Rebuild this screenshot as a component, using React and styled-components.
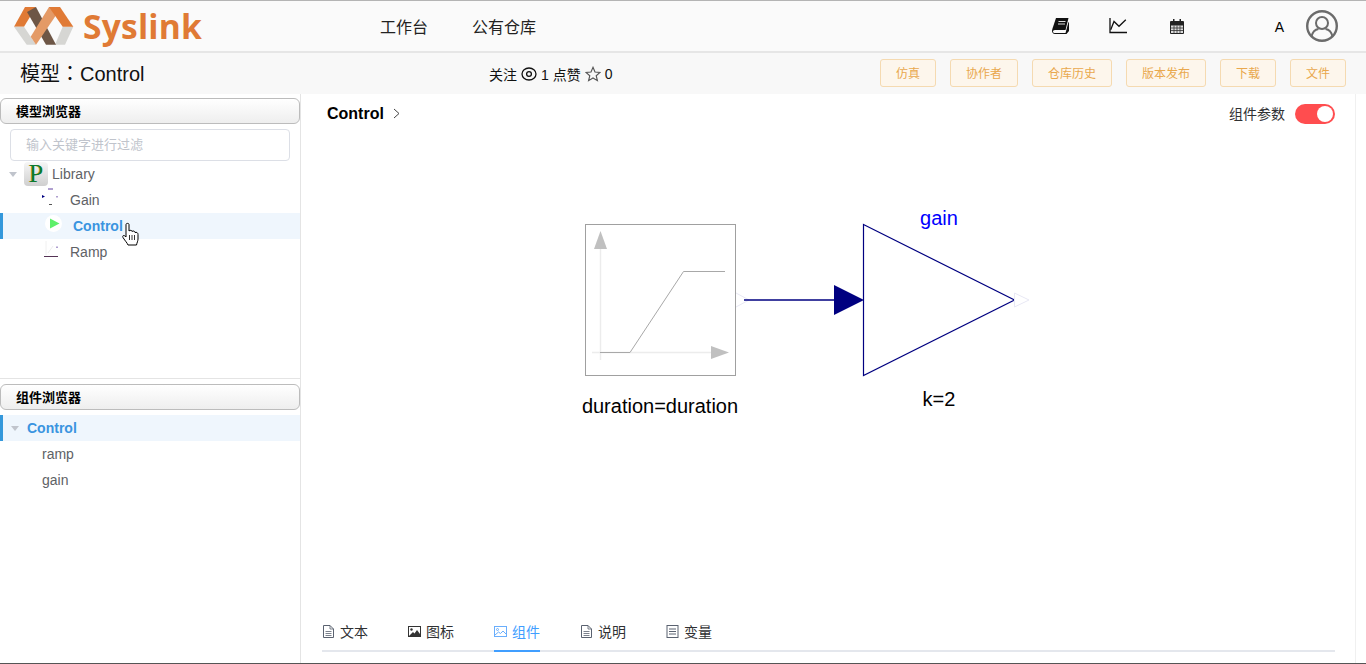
import React from "react";
import styled, { createGlobalStyle } from "styled-components";

const Global = createGlobalStyle`
  html, body { margin: 0; padding: 0; height: 100%; overflow: hidden; background: #fff; }
  * { box-sizing: border-box; }
  #root { height: 664px; font-family: "Liberation Sans", "Noto Sans CJK SC", sans-serif; color: #000; }
`;

const Page = styled.div`
  height: 664px; display: flex; flex-direction: column; overflow: hidden;
  border-top: 1px solid #b4b4b4; border-bottom: 1px solid #555;
`;
const Header = styled.header`
  height: 52px; flex: none; display: flex; align-items: center; background: #fafafa;
  border-bottom: 2px solid #e6e6e6; padding-left: 14px;
`;
const Brand = styled.div`display: flex; align-items: center; width: 366px; gap: 9px;`;
const BrandName = styled.span`
  font-family: "Open Sans", sans-serif; font-weight: 700; font-size: 33.6px; line-height: 40px;
  color: #e07a35; letter-spacing: 0.2px;
`;
const Nav = styled.nav`display: flex; gap: 44px; font-size: 16px; color: #222;`;
const HeaderTools = styled.div`
  margin-left: auto; display: flex; align-items: center; padding-right: 28px;
`;
const ToolIcon = styled.span`
  width: 18px; height: 18px; display: flex; align-items: center; justify-content: center;
  margin-right: ${p => p.$gap}px;
`;
const UserLetter = styled.span`font-size: 14px; margin: 2px 22px 0 0;`;
const UserIcon = styled.span`display: flex;`;

const SubBar = styled.div`
  height: 41px; flex: none; background: #f8f8f8; display: flex; align-items: center; padding: 0 20px;
`;
const Title = styled.div`
  font-family: "Liberation Sans", "Noto Sans CJK TC", sans-serif;
  font-size: 20px; line-height: 26px; width: 469px; color: #111;
`;
const Stats = styled.div`display: flex; align-items: center; gap: 4px; font-size: 14px; color: #111;`;
const Actions = styled.div`margin: -2px 0 0 auto; display: flex; gap: 14px;`;
const ActionButton = styled.button`
  height: 28px; padding: 0 15px; font: 12px "Liberation Sans", "Noto Sans CJK SC", sans-serif;
  color: #e9a84d; background: #fdf6ec; border: 1px solid #f5dab1; border-radius: 3px;
`;

const Body = styled.div`flex: 1; min-height: 0; display: flex;`;
const Sidebar = styled.aside`
  width: 301px; flex: none; border-right: 1px solid #e4e4e4; display: flex; flex-direction: column;
`;
const Panel = styled.section`
  height: ${p => p.$height}; flex: ${p => p.$grow ? 1 : "none"};
  padding-top: ${p => p.$top}px; ${p => p.$divided && "border-bottom: 1px solid #e4e4e4;"}
`;
const PanelHead = styled.div`
  height: 26px; border: 1px solid #bcbcbc; border-radius: 6px; padding-left: 15px;
  background: linear-gradient(#ffffff, #eeeeee); font-size: 13px; font-weight: 700; line-height: 25px;
`;
const Filter = styled.div`
  margin: 5px 10px 0; height: 32px; border: 1px solid #dcdfe6; border-radius: 4px;
  padding-left: 15px; font-size: 13px; line-height: 29px; color: #c0c4cc;
`;
const Row = styled.div`
  height: 26px; display: flex; align-items: center; position: relative; font-size: 14px; color: #606266;
  padding-left: ${p => p.$indent}px;
  ${p => p.$active && `
    background: #eff6fd; color: #3a94e0; font-weight: 700;
    box-shadow: inset 3px 0 0 #3498db;
  `}
`;
const Caret = styled.span`
  width: 0; height: 0; border: 4px solid transparent; border-top: 5px solid #c0c4cc; border-bottom: 0;
  margin-right: ${p => p.$gap}px;
`;
const TreeGlyph = styled.svg`flex: none; margin: -6px ${p => p.$gap}px 0 0;`;
const PBadge = styled.span`
  width: 24px; height: 24px; border-radius: 4px; margin-right: 4px; flex: none;
  background: linear-gradient(#f6f6f6, #cfcfcf); text-align: center;
  font: 26px/23px "Liberation Serif", serif; color: #0a7a30; text-shadow: -0.6px 0 0 #d0a000;
`;
const HandCursor = styled.svg`position: absolute; left: 122px; top: 9px;`;
const Spacer = styled.div`height: ${p => p.$h}px;`;

const Main = styled.main`
  flex: 1; min-width: 0; display: flex; flex-direction: column; border-right: 1px solid #f0f0f0;
  margin-right: 10px; padding: 0 20px 0 21px;
`;
const Crumb = styled.div`
  height: 40px; flex: none; display: flex; align-items: center; padding-left: 5px;
`;
const CrumbTitle = styled.span`font-size: 16px; font-weight: 700;`;
const CrumbArrow = styled.svg`margin: -2px 0 0 9px;`;
const ToggleLabel = styled.span`margin: -2px 0 0 auto; font-size: 14px; color: #303133;`;
const Toggle = styled.span`
  margin-left: 10px; width: 40px; height: 20px; border-radius: 10px; background: #ff4d4f; position: relative;
  &::after { content: ""; position: absolute; right: 2px; top: 2px; width: 16px; height: 16px; border-radius: 50%; background: #fff; }
`;
const Canvas = styled.div`flex: 1; min-height: 0; padding: 66px 0 0 248px;`;
const DiagramSvg = styled.svg`display: block;`;
const Tabs = styled.div`
  flex: none; height: 38px; display: flex; gap: 40px; border-bottom: 2px solid #e4e7ed; margin-bottom: 11px;
`;
const Tab = styled.div`
  height: 38px; flex: none; display: flex; align-items: center; gap: 5px; font-size: 14px; padding-bottom: 2px;
  color: ${p => p.$active ? "#409eff" : "#303133"};
  border-bottom: 2px solid ${p => p.$active ? "#409eff" : "transparent"};
`;

const Logo = () => (
  <svg width="60" height="38" viewBox="0 0 60 38">
    <path d="M0 19.700L11 0H22L10 19.700Z" fill="#e07a35" />
    <path d="M0 19.700H10L22 37.700H12.700Z" fill="#d6d6d3" />
    <path d="M48.700 19.700H59.300L51 37.700H41Z" fill="#d6d6d3" />
    <path d="M22 0L42 37.700H32L13 5Z" fill="#6d5646" />
    <path d="M35 0H46L41 9.700L22 37.700L16.700 29.700Z" fill="#e49a66" />
    <path d="M35 0H46L59.300 19.700H48.700Z" fill="#e07a35" />
  </svg>
);

const BookIcon = () => (
  <svg width="17" height="16" viewBox="0 0 17 16">
    <path d="M4 0h12.500l-3 12H3C1.500 12 1 13 1 13.500 1 14.500 2 15 3 15h10.500L16.500 4l.5.500v8.500l-2.500 3H3C1 16 0 14.500 0 13c0-1 .5-2.500 1-4z" fill="#111" />
    <path d="M6.500 3.500h7M6 6h7" stroke="#ddd" strokeWidth="1" />
  </svg>
);
const ChartIcon = () => (
  <svg width="18" height="16" viewBox="0 0 18 16" fill="none" stroke="#111">
    <path d="M1 0V14.500H18" strokeWidth="1.300" />
    <path d="M1.700 11.700L5 3.500L10 8.300L16.800 1.700" strokeWidth="1.300" />
  </svg>
);
const CalendarIcon = () => (
  <svg width="14" height="15" viewBox="0 0 14 15">
    <rect x="0" y="2" width="14" height="13" rx="1" fill="#222" />
    <rect x="3" y="0" width="1.500" height="3" fill="#222" />
    <rect x="9.500" y="0" width="1.500" height="3" fill="#222" />
    <rect x="1" y="6.500" width="12" height="7.500" fill="#ddd" />
    <path d="M1 9h12M1 11.500h12M4 6.500v7.500M7 6.500v7.500M10 6.500v7.500" stroke="#333" strokeWidth=".8" />
  </svg>
);
const UserGlyph = () => (
  <svg width="32" height="32" viewBox="0 0 32 32" fill="none" stroke="#6b6b6b">
    <circle cx="16" cy="16" r="14.800" strokeWidth="2.400" />
    <circle cx="16" cy="13" r="6" strokeWidth="2" />
    <path d="M5.500 26.500c1-4.500 3.500-7 7-7.500M26.500 26.500c-1-4.500-3.500-7-7-7.500" strokeWidth="2" />
  </svg>
);
const EyeIcon = () => (
  <svg width="16" height="14" viewBox="0 0 16 14" fill="none" stroke="#111" strokeWidth="1.300">
    <ellipse cx="8" cy="7" rx="7" ry="6" />
    <circle cx="8" cy="7" r="2.400" />
  </svg>
);
const StarIcon = () => (
  <svg width="16" height="16" viewBox="0 0 24 24" fill="none" stroke="#555" strokeWidth="1.700">
    <path d="M12 2l3 7 7.500.6-5.700 5 1.800 7.400L12 18l-6.600 4 1.800-7.400-5.700-5L9 9z" />
  </svg>
);
const DocIcon = () => (
  <svg width="13" height="13" viewBox="0 0 13 13" fill="none" stroke="#5a6270">
    <path d="M1.500.5H8L11.500 4V12.500H1.500Z" />
    <path d="M8 .5V4H11.500M3.500 6.500H9.500M3.500 8.500H9.500M3.500 10.500H9.500" strokeWidth=".8" />
  </svg>
);
const PictureIcon = () => (
  <svg width="13" height="13" viewBox="0 0 13 13">
    <rect x=".5" y="1.500" width="12" height="10" fill="#fff" stroke="#333" />
    <circle cx="3.500" cy="4.500" r="1.200" fill="#333" />
    <path d="M1 11L5 7l1.500 1.500L9 5l3 4v2.500H1Z" fill="#333" />
  </svg>
);
const PictureOutlineIcon = () => (
  <svg width="13" height="13" viewBox="0 0 13 13" fill="none" stroke="#6aaefc">
    <rect x=".5" y="1.500" width="12" height="10" />
    <circle cx="3.500" cy="4.500" r="1" />
    <path d="M1 10L4.500 7l2 1.500L9 6l3 3" />
  </svg>
);
const ListIcon = () => (
  <svg width="13" height="13" viewBox="0 0 13 13" fill="none" stroke="#5a6270">
    <rect x="1" y=".5" width="11" height="12" />
    <path d="M3 4h7M3 6.500h7M3 9h7" />
  </svg>
);
const Hand = () => (
  <HandCursor width="18" height="24" viewBox="0 0 18 24">
    <path d="M4 2.500C4 1 7 1 7 2.500V9C8 8 10 8 10 9.500C11 8.500 13 9 13 10.500C14.500 10 16 10.500 16 12.500V17C16 19 15 20.500 14.500 23H6C5 20.500 3.500 19.500 1 15.500C0 13.500 2 12.500 4 15Z" fill="#fff" stroke="#000" />
    <path d="M7.500 13v5M10 13v5M12.500 13v5" stroke="#000" strokeWidth=".8" />
  </HandCursor>
);

const Diagram = () => (
  <DiagramSvg width="480" height="224" viewBox="570 200 480 224">
    <rect x="585.500" y="224.500" width="150" height="151" fill="#fff" stroke="#a0a0a0" />
    <path d="M600.500 245V360" stroke="#ececec" strokeWidth="1.500" />
    <path d="M592 352.500H715" stroke="#ececec" strokeWidth="1.500" />
    <path d="M600.500 231L607 249H594Z" fill="#c0c0c0" />
    <path d="M729 352.500L711 346V359Z" fill="#c0c0c0" />
    <path d="M600 352.500H630L683.500 271.500H725" fill="none" stroke="#a8a8a8" />
    <path d="M736 293L749 300L736 307" fill="none" stroke="#e8e8f4" />
    <path d="M744 300H835" stroke="#000080" strokeWidth="1.500" />
    <path d="M834 285L864 300L834 315Z" fill="#000080" />
    <path d="M863.500 224.500L1014.500 300L863.500 375.500Z" fill="#fff" stroke="#000080" strokeWidth="1.200" />
    <path d="M1014.500 293L1029 300L1014.500 307Z" fill="#fff" stroke="#e8e8f4" />
    <text x="939" y="225" textAnchor="middle" fontSize="20" fill="#0000ff" fontFamily="Liberation Sans">gain</text>
    <text x="939" y="406" textAnchor="middle" fontSize="20" fill="#000" fontFamily="Liberation Sans">k=2</text>
    <text x="660" y="413" textAnchor="middle" fontSize="20" fill="#000" fontFamily="Liberation Sans">duration=duration</text>
  </DiagramSvg>
);

export default function App() {
  return (
    <Page>
      <Global />
      <Header>
        <Brand><Logo /><BrandName>Syslink</BrandName></Brand>
        <Nav><span>工作台</span><span>公有仓库</span></Nav>
        <HeaderTools>
          <ToolIcon $gap={39}><BookIcon /></ToolIcon>
          <ToolIcon $gap={41}><ChartIcon /></ToolIcon>
          <ToolIcon $gap={89}><CalendarIcon /></ToolIcon>
          <UserLetter>A</UserLetter>
          <UserIcon><UserGlyph /></UserIcon>
        </HeaderTools>
      </Header>
      <SubBar>
        <Title>模型：Control</Title>
        <Stats>关注 <EyeIcon /> 1 点赞 <StarIcon /> 0</Stats>
        <Actions>
          {["仿真", "协作者", "仓库历史", "版本发布", "下载", "文件"].map(t => (
            <ActionButton key={t}>{t}</ActionButton>
          ))}
        </Actions>
      </SubBar>
      <Body>
        <Sidebar>
          <Panel $height="285px" $top={4} $divided>
            <PanelHead>模型浏览器</PanelHead>
            <Filter>输入关键字进行过滤</Filter>
            <Row $indent={9}>
              <Caret $gap={7} />
              <PBadge>P</PBadge>Library
            </Row>
            <Row $indent={42}>
              <TreeGlyph $gap={12} width="16" height="18" viewBox="0 0 16 18">
                <path d="M0 7l3 1.500-3 1.500z" fill="#000080" />
                <path d="M6 1h5" stroke="#6040a0" />
                <path d="M15 8v1.500" stroke="#6040a0" />
                <path d="M7 16.500h3" stroke="#555" />
              </TreeGlyph>
              Gain
            </Row>
            <Row $indent={45} $active>
              <TreeGlyph $gap={11} width="17" height="17" viewBox="0 0 17 17">
                <circle cx="8.500" cy="8.500" r="8.500" fill="#fff" />
                <path d="M5 3.500l9.500 5-9.500 5z" fill="#5ef06a" />
              </TreeGlyph>
              Control
              <Hand />
            </Row>
            <Row $indent={44}>
              <TreeGlyph $gap={11} width="15" height="18" viewBox="0 0 15 18">
                <path d="M0 16.500h14" stroke="#553355" />
                <path d="M4 13l5-7" stroke="#eee" />
                <path d="M2 1v14" stroke="#f0f0f0" />
                <path d="M13 6.500v1.500" stroke="#6040a0" />
              </TreeGlyph>
              Ramp
            </Row>
          </Panel>
          <Panel $grow $top={5}>
            <PanelHead>组件浏览器</PanelHead>
            <Spacer $h={5} />
            <Row $indent={11} $active><Caret $gap={8} />Control</Row>
            <Row $indent={42}>ramp</Row>
            <Row $indent={42}>gain</Row>
          </Panel>
        </Sidebar>
        <Main>
          <Crumb>
            <CrumbTitle>Control</CrumbTitle>
            <CrumbArrow width="7" height="11" viewBox="0 0 7 11" fill="none" stroke="#444"><path d="M1 1l5 4.500-5 4.500" /></CrumbArrow>
            <ToggleLabel>组件参数</ToggleLabel>
            <Toggle />
          </Crumb>
          <Canvas><Diagram /></Canvas>
          <Tabs>
            <Tab><DocIcon />文本</Tab>
            <Tab><PictureIcon />图标</Tab>
            <Tab $active><PictureOutlineIcon />组件</Tab>
            <Tab><DocIcon />说明</Tab>
            <Tab><ListIcon />变量</Tab>
          </Tabs>
        </Main>
      </Body>
    </Page>
  );
}
